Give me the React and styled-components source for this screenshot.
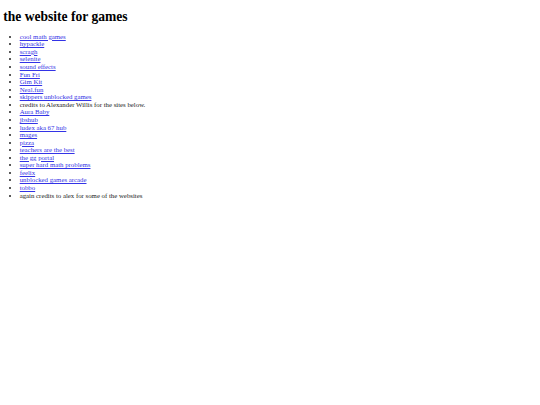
import React from 'react';
import styled, { createGlobalStyle } from 'styled-components';

// the whole page is drawn at about 0.41 of the browser defaults
const GlobalStyle = createGlobalStyle`
  html, body {
    margin: 0;
    padding: 0;
    background: #fff;
  }
  body {
    font-family: "Liberation Serif", "Times New Roman", serif;
    color: #000;
  }
`;

const items = [
  { text: 'cool math games', link: true },
  { text: 'hypackle', link: true },
  { text: 'scragh', link: true },
  { text: 'selenite', link: true },
  { text: 'sound effects', link: true },
  { text: 'Fun Fri', link: true },
  { text: 'Gim Kit', link: true },
  { text: 'Neal.fun', link: true },
  { text: 'skippers unblocked games', link: true },
  { text: 'credits to Alexander Willis for the sites below.', link: false },
  { text: 'Aura Baby', link: true },
  { text: 'jbshub', link: true },
  { text: 'ludex aka 67 hub', link: true },
  { text: 'mages', link: true },
  { text: 'pizza', link: true },
  { text: 'teachers are the best', link: true },
  { text: 'the gg portal', link: true },
  { text: 'super hard math problems', link: true },
  { text: 'feelix', link: true },
  { text: 'unblocked games arcade', link: true },
  { text: 'tobbo', link: true },
  { text: 'again credits to alex for some of the websites', link: false },
];

export default function App() {
  return (
    <>
      <GlobalStyle />
      <Page>
        <Title>the website for games</Title>
        <LinkList>
          {items.map((item, i) => (
            <Item key={i}>
              {item.link ? <ItemLink href="#">{item.text}</ItemLink> : item.text}
            </Item>
          ))}
        </LinkList>
      </Page>
    </>
  );
}

const Page = styled.div`
  padding: 0 3.3px;
  overflow: hidden;
`;
const Title = styled.h1`
  font-size: 13.55px;
  line-height: 15.2px;
  font-weight: bold;
  margin: 8.8px 0;
`;
const LinkList = styled.ul`
  margin: 8.8px 0;
  padding-left: 16.4px;
  font-size: 6.8px;
  line-height: 7.57px;
  list-style: disc;
  color: #222;
`;
const Item = styled.li``;
const ItemLink = styled.a`
  color: #3333e6;
  text-decoration: underline;
`;
